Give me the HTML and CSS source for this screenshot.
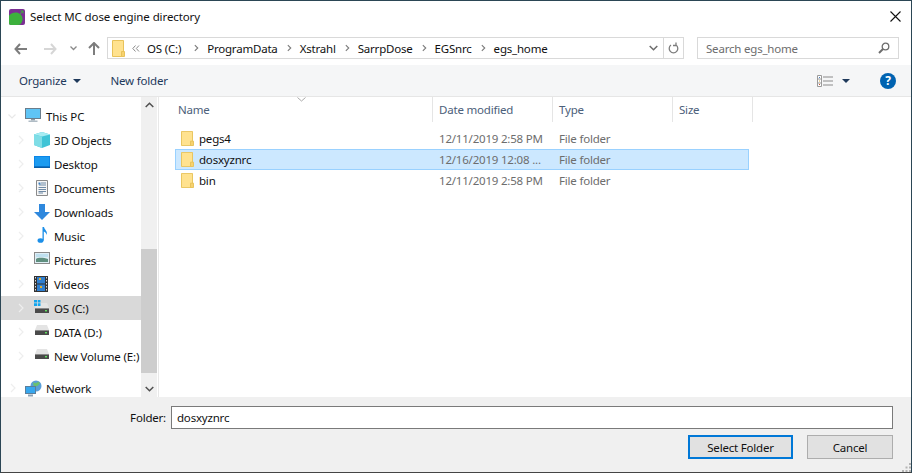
FILE: index.html
```html
<!DOCTYPE html>
<html lang="en">
<head>
<meta charset="utf-8">
<title>Select MC dose engine directory</title>
<link rel="stylesheet" href="styles.css">
</head>
<body>
<svg class="defs" width="0" height="0" aria-hidden="true">
  <symbol id="folder" viewBox="0 0 13 17">
    <path d="M.5 .5H11.5V16.5H.5Z" fill="#ffe28f" stroke="#e8c25a"/>
    <path d="M9.5 11.5H12.5V16.5H9.5Z" fill="#f7d26f" stroke="#e8c25a"/>
  </symbol>
  <symbol id="chev-r" viewBox="0 0 6 8"><path d="M1 .5 4.5 4 1 7.5" fill="none" stroke="#7a7a7a" stroke-width="1.3"/></symbol>
  <symbol id="tree-r" viewBox="0 0 6 10"><path d="M1 1 5 5 1 9" fill="none" stroke="#eeeeee" stroke-width="1.2"/></symbol>
  <symbol id="drive" viewBox="0 0 16 12">
    <path d="M3 1H13L15 6H1Z" fill="#e4e4e4"/>
    <rect x="1" y="6" width="14" height="5" fill="#4a4a4a"/>
    <rect x="1" y="6" width="14" height="1" fill="#8a8a8a"/>
    <rect x="11" y="8" width="2" height="1.4" fill="#5fe05f"/>
  </symbol>
</svg>
<div class="window">
  <header class="titlebar">
    <svg class="app-icon" width="16" height="16" viewBox="0 0 16 16">
      <rect width="16" height="16" rx="2" fill="#7b2f93"/>
      <path d="M0 6.5C2 4 5 3 8 3.500 12 4.500 14 8 13.500 11 13 14 11 16 9 16H2C.500 16 0 15 0 14Z" fill="#3cb13c"/>
      <path d="M10 6 14 2M14 2H11.500M14 2V4.500" stroke="#3cb13c" stroke-width="1" fill="none"/>
    </svg>
    <span class="title">Select MC dose engine directory</span>
    <svg class="close" width="11" height="11" viewBox="0 0 11 11"><path d="M.5 .5 10.500 10.500M10.500 .5 .5 10.500" stroke="#111" stroke-width="1.1"/></svg>
  </header>

  <nav class="navbar">
    <svg class="nav-icon back" width="13" height="12" viewBox="0 0 13 12"><path d="M6 1 1.500 6 6 11M2 6H13" fill="none" stroke="#7d7d7d" stroke-width="2"/></svg>
    <svg class="nav-icon forward" width="13" height="12" viewBox="0 0 13 12"><path d="M7 1 11.500 6 7 11M11 6H0" fill="none" stroke="#d6d6d6" stroke-width="2"/></svg>
    <svg class="nav-icon recent" width="7" height="5" viewBox="0 0 7 5"><path d="M.5 .5 3.500 3.500 6.500 .5" fill="none" stroke="#8a8a8a" stroke-width="1.300"/></svg>
    <svg class="nav-icon up" width="12" height="13" viewBox="0 0 12 13"><path d="M1 6 6 1 11 6M6 1.500V13" fill="none" stroke="#7d7d7d" stroke-width="2"/></svg>
    <div class="address">
      <svg class="addr-folder" width="13" height="17"><use href="#folder"/></svg>
      <svg class="crumb-more" width="8" height="7" viewBox="0 0 8 7"><path d="M3.500 .5 .8 3.500 3.500 6.500M7 .5 4.300 3.500 7 6.500" fill="none" stroke="#8a8a8a"/></svg>
      <span class="crumb crumb-first">OS (C:)</span>
      <svg class="sep" width="5" height="8"><use href="#chev-r"/></svg>
      <span class="crumb">ProgramData</span>
      <svg class="sep" width="5" height="8"><use href="#chev-r"/></svg>
      <span class="crumb">Xstrahl</span>
      <svg class="sep" width="5" height="8"><use href="#chev-r"/></svg>
      <span class="crumb">SarrpDose</span>
      <svg class="sep" width="5" height="8"><use href="#chev-r"/></svg>
      <span class="crumb">EGSnrc</span>
      <svg class="sep" width="5" height="8"><use href="#chev-r"/></svg>
      <span class="crumb">egs_home</span>
      <span class="spacer"></span>
      <svg class="addr-drop" width="9" height="6" viewBox="0 0 9 6"><path d="M.7 1 4.500 4.800 8.300 1" fill="none" stroke="#6d6d6d" stroke-width="1.500"/></svg>
      <span class="refresh">
        <svg width="11" height="12" viewBox="0 0 11 12"><path d="M3 3A4.300 4.300 0 1 0 8 3M8 .5V3.500H5" fill="none" stroke="#7d7d7d" stroke-width="1.300"/></svg>
      </span>
    </div>
    <div class="search">
      <span>Search egs_home</span>
      <svg width="12" height="12" viewBox="0 0 12 12"><circle cx="7.500" cy="4.500" r="3.300" fill="none" stroke="#6d6d6d" stroke-width="1.300"/><path d="M5 7 1 11" stroke="#6d6d6d" stroke-width="2"/></svg>
    </div>
  </nav>

  <div class="toolbar">
    <span class="tool">Organize</span>
    <span class="tri tri-org"></span>
    <span class="tool new-folder">New folder</span>
    <span class="spacer"></span>
    <svg class="view-icon" width="16" height="12" viewBox="0 0 16 12">
      <path d="M.5 .5H4.500V11.500H.5Z" fill="#fff" stroke="#9a9a9a"/>
      <path d="M1 4H4M1 8H4" stroke="#9a9a9a"/>
      <rect x="2" y="2" width="1" height="1" fill="#4a7fc0"/><rect x="2" y="5.500" width="1" height="1" fill="#d9a93c"/><rect x="2" y="9" width="1" height="1" fill="#c9543c"/>
      <path d="M6 2H16M6 6H16M6 10H16" stroke="#8a8a8a"/>
    </svg>
    <span class="tri tri-view"></span>
    <span class="help">?</span>
  </div>

  <main class="panes">
    <aside class="tree">
      <ul class="tree-list">
        <li class="tree-row root">
          <svg class="twist" width="8" height="5" viewBox="0 0 8 5"><path d="M.5 .5 4 4 7.500 .5" fill="none" stroke="#e8e8e8" stroke-width="1.200"/></svg>
          <svg class="ticon" width="16" height="14" viewBox="0 0 16 14"><rect x=".5" y=".5" width="15" height="10" fill="#5fc4f5" stroke="#6a7d8c"/><rect x="6" y="11" width="4" height="1.500" fill="#8a9aa6"/><rect x="3.500" y="12.500" width="9" height="1.500" fill="#b0bcc5"/></svg>
          <span>This PC</span>
        </li>
        <li class="tree-row">
          <svg class="twist-r" width="6" height="10"><use href="#tree-r"/></svg>
          <svg class="ticon" width="16" height="16" viewBox="0 0 16 16"><path d="M8 0 16 2.500V13L8 16 0 13V2.500Z" fill="#3fc4d6"/><path d="M8 4.500 16 2.500 8 0 0 2.500Z" fill="#a6ecf2"/><path d="M8 4.500V16L0 13V2.500Z" fill="#7fdde6"/></svg>
          <span>3D Objects</span>
        </li>
        <li class="tree-row">
          <svg class="twist-r" width="6" height="10"><use href="#tree-r"/></svg>
          <svg class="ticon" width="16" height="12" viewBox="0 0 16 12"><rect width="16" height="11" fill="#0b86e8"/><rect x="1" y="1" width="14" height="9" fill="#1c9bf0"/><rect y="10.500" width="16" height="1.500" fill="#0a5fa8"/></svg>
          <span>Desktop</span>
        </li>
        <li class="tree-row">
          <svg class="twist-r" width="6" height="10"><use href="#tree-r"/></svg>
          <svg class="ticon" width="16" height="16" viewBox="0 0 16 16"><path d="M2.500 .5H13.500V15.500H2.500Z" fill="#f6f6f6" stroke="#8a8a8a"/><path d="M7 3H12M5 5H12M4.500 7.500H12M4.500 9.500H12M4.500 11.500H12M4.500 13H9" stroke="#6f8aa5"/><rect x="4.500" y="2.500" width="2" height="2" fill="#3c7fc0"/></svg>
          <span>Documents</span>
        </li>
        <li class="tree-row">
          <svg class="twist-r" width="6" height="10"><use href="#tree-r"/></svg>
          <svg class="ticon" width="16" height="16" viewBox="0 0 16 16"><path d="M5 0H11V8H16L8 16 0 8H5Z" fill="#2f88dd"/></svg>
          <span>Downloads</span>
        </li>
        <li class="tree-row">
          <svg class="twist-r" width="6" height="10"><use href="#tree-r"/></svg>
          <svg class="ticon" width="16" height="16" viewBox="0 0 16 16"><ellipse cx="6.500" cy="13.500" rx="3" ry="2.300" fill="#1c8fe8"/><path d="M8.500 0H10C10.500 3 14 4 12.500 8 12.500 6 11 5 9.800 4.500V13.500H8.500Z" fill="#1c8fe8"/></svg>
          <span>Music</span>
        </li>
        <li class="tree-row">
          <svg class="twist-r" width="6" height="10"><use href="#tree-r"/></svg>
          <svg class="ticon" width="16" height="12" viewBox="0 0 16 12"><rect x=".5" y=".5" width="15" height="11" fill="#dfeef5" stroke="#8a8a8a"/><path d="M2 7C5 5 10 6 14 7V10H2Z" fill="#5f8f7f"/><rect x="2" y="2" width="12" height="3" fill="#bfe0ef"/></svg>
          <span>Pictures</span>
        </li>
        <li class="tree-row">
          <svg class="twist-r" width="6" height="10"><use href="#tree-r"/></svg>
          <svg class="ticon" width="14" height="16" viewBox="0 0 14 16"><rect width="14" height="16" fill="#333"/><rect x="3" y="1" width="8" height="6.500" fill="#2f7fd0"/><rect x="3" y="8.500" width="8" height="6.500" fill="#2f7fd0"/><rect x="5" y="2" width="2" height="2" fill="#e0b030"/><rect x="6" y="10" width="2" height="2" fill="#e0b030"/><path d="M1.500 1V15M12.500 1V15" stroke="#ddd" stroke-dasharray="1.500 1.500"/></svg>
          <span>Videos</span>
        </li>
        <li class="tree-row active">
          <svg class="twist-r" width="6" height="10"><use href="#tree-r"/></svg>
          <svg class="ticon" width="16" height="14" viewBox="0 0 16 14"><use href="#drive" y="2" width="16" height="12"/><path d="M0 0H3V2.500H0ZM3.700 0H6.500V2.500H3.700ZM0 3.300H3V6H0ZM3.700 3.300H6.500V6H3.700Z" fill="#12a5ee"/></svg>
          <span>OS (C:)</span>
        </li>
        <li class="tree-row">
          <svg class="twist-r" width="6" height="10"><use href="#tree-r"/></svg>
          <svg class="ticon" width="16" height="12"><use href="#drive"/></svg>
          <span>DATA (D:)</span>
        </li>
        <li class="tree-row">
          <svg class="twist-r" width="6" height="10"><use href="#tree-r"/></svg>
          <svg class="ticon" width="16" height="12"><use href="#drive"/></svg>
          <span>New Volume (E:)</span>
        </li>
        <li class="tree-row root network">
          <svg class="twist-r root-twist" width="6" height="10"><use href="#tree-r"/></svg>
          <svg class="ticon" width="17" height="17" viewBox="0 0 17 17"><circle cx="11" cy="6" r="5.500" fill="#5a9fd8"/><path d="M8 2C10 4 12 3 13 1.500L15 3C14 6 11 6 9 8Z" fill="#6cc070"/><rect x=".5" y="6.500" width="10" height="7" fill="#37a7ee" stroke="#5b7f9c"/><rect x="3" y="14.500" width="5" height="2" fill="#8da3b5"/></svg>
          <span>Network</span>
        </li>
      </ul>
      <div class="tree-scroll">
        <svg class="sarrow" width="9" height="6" viewBox="0 0 9 6"><path d="M.7 5 4.500 1.200 8.300 5" fill="none" stroke="#505050" stroke-width="1.500"/></svg>
        <span class="sthumb"></span>
        <svg class="sarrow" width="9" height="6" viewBox="0 0 9 6"><path d="M.7 1 4.500 4.800 8.300 1" fill="none" stroke="#505050" stroke-width="1.500"/></svg>
      </div>
    </aside>

    <section class="files">
      <div class="file-head">
        <span class="col col-name">Name
          <svg class="sort" width="9" height="5" viewBox="0 0 9 5"><path d="M.5 .5 4.500 4 8.500 .5" fill="none" stroke="#a9a9a9"/></svg>
        </span>
        <span class="col col-date">Date modified</span>
        <span class="col col-type">Type</span>
        <span class="col col-size">Size</span>
      </div>
      <div class="file-row">
        <svg class="ficon" width="13" height="15" viewBox="0 0 13 17" preserveAspectRatio="none"><use href="#folder"/></svg>
        <span class="f-name">pegs4</span><span class="f-date">12/11/2019 2:58 PM</span><span class="f-type">File folder</span>
      </div>
      <div class="file-row selected">
        <svg class="ficon" width="13" height="15" viewBox="0 0 13 17" preserveAspectRatio="none"><use href="#folder"/></svg>
        <span class="f-name">dosxyznrc</span><span class="f-date">12/16/2019 12:08 ...</span><span class="f-type">File folder</span>
      </div>
      <div class="file-row">
        <svg class="ficon" width="13" height="15" viewBox="0 0 13 17" preserveAspectRatio="none"><use href="#folder"/></svg>
        <span class="f-name">bin</span><span class="f-date">12/11/2019 2:58 PM</span><span class="f-type">File folder</span>
      </div>
    </section>
  </main>

  <footer class="footer">
    <div class="folder-line">
      <label class="folder-label" for="folder">Folder:</label>
      <input class="folder-input" id="folder" type="text" value="dosxyznrc">
    </div>
    <div class="buttons">
      <button class="btn btn-primary" type="button">Select Folder</button>
      <button class="btn btn-cancel" type="button">Cancel</button>
    </div>
    <svg class="grip" width="9" height="9" viewBox="0 0 9 9"><path d="M7 0H9V2H7ZM3.500 3.500H5.500V5.500H3.500ZM7 3.500H9V5.500H7ZM0 7H2V9H0ZM3.500 7H5.500V9H3.500ZM7 7H9V9H7Z" fill="#b4b4b4"/></svg>
  </footer>
</div>
</body>
</html>
```
FILE: styles.css
```css
* { box-sizing: border-box; }
html, body { margin: 0; padding: 0; height: 100%; overflow: hidden; background: #fff; }
body {
  font-family: "Noto Sans", "Open Sans", "Liberation Sans", sans-serif;
  font-size: 11.5px;
  letter-spacing: -.2px;
  color: #111;
}
.defs { position: absolute; }
.spacer { flex: 1; }

.window {
  width: 912px;
  height: 473px;
  display: flex;
  flex-direction: column;
  border: 1px solid #2b4655;
  border-bottom-color: #444;
  background: #fff;
  overflow: hidden;
}

.titlebar {
  height: 30px;
  flex: none;
  display: flex;
  align-items: center;
  padding: 0 10px 0 8px;
}
.app-icon { margin-top: 1px; }
.title { margin-left: 5px; letter-spacing: -.1px; }
.close { margin-left: auto; }

.navbar {
  height: 34px;
  flex: none;
  display: flex;
  align-items: flex-start;
  padding-top: 6px;
  padding-left: 13px;
}
.nav-icon { flex: none; margin-top: 6px; }
.forward { margin-left: 17px; }
.recent { margin-left: 13px; margin-top: 9px; }
.up { margin-left: 11px; margin-top: 5px; }

.address {
  margin-left: 7px;
  width: 577px;
  height: 22px;
  border: 1px solid #d9d9d9;
  display: flex;
  align-items: center;
  padding-left: 4px;
  flex: none;
}
.addr-folder { flex: none; }
.crumb-more { flex: none; margin: 0 7px 0 7px; }
.crumb { white-space: nowrap; }
.crumb-first { margin-right: 4px; }
.sep { flex: none; margin: 0 8px 0 9px; }
.addr-drop { margin-right: 5px; }
.refresh {
  width: 20px;
  height: 20px;
  border-left: 1px solid #d9d9d9;
  display: flex;
  align-items: center;
  justify-content: center;
}
.search {
  margin-left: 13px;
  width: 202px;
  height: 22px;
  border: 1px solid #d9d9d9;
  display: flex;
  align-items: center;
  justify-content: space-between;
  padding: 0 8px;
  color: #6d6d6d;
  flex: none;
}

.toolbar {
  height: 32px;
  flex: none;
  display: flex;
  align-items: center;
  background: #f5f6f7;
  border-bottom: 1px solid #e6e6e6;
  padding-left: 18px;
  color: #1e395b;
}
.tri {
  width: 0;
  height: 0;
  border-left: 4px solid transparent;
  border-right: 4px solid transparent;
  border-top: 4px solid #1e395b;
}
.tri-org { margin-left: 6px; }
.new-folder { margin-left: 30px; }
.tri-view { margin-left: 9px; }
.help {
  width: 16px;
  height: 16px;
  margin: 0 15px 0 30px;
  border-radius: 50%;
  background: #0063b1;
  color: #fff;
  font-weight: 700;
  font-size: 12px;
  line-height: 16px;
  text-align: center;
}

.panes { flex: 1; display: flex; min-height: 0; }

.tree {
  width: 158px;
  flex: none;
  display: flex;
  border-right: 1px solid #e8e8e8;
}
.tree-list {
  list-style: none;
  margin: 0;
  padding: 7px 0 0;
  width: 140px;
  flex: none;
}
.tree-row {
  height: 24px;
  display: flex;
  align-items: center;
  position: relative;
  padding-left: 53px;
  white-space: nowrap;
  letter-spacing: -.13px;
}
.tree-row.root { padding-left: 45px; }
.tree-row.active { background: #d9d9d9; }
.tree-row.network { margin-top: 8px; }
.twist-r, .twist, .ticon { position: absolute; }
.twist-r { left: 17px; top: 7px; }
.root-twist { left: 9px; }
.twist { left: 7px; top: 10px; }
.ticon { left: 33px; top: 4px; }
.tree-row.root .ticon { left: 24px; }
.tree-row:nth-child(6) .ticon { top: 3px; }

.tree-scroll {
  width: 16px;
  flex: none;
  background: #f0f0f0;
  display: flex;
  flex-direction: column;
  align-items: center;
}
.sarrow { flex: none; margin: 5px 0; }
.sthumb {
  width: 16px;
  height: 124px;
  background: #cdcdcd;
  margin-top: 136px;
  margin-bottom: 8px;
}

.files { flex: 1; padding-left: 16px; position: relative; }
.file-head {
  height: 25px;
  display: flex;
  color: #4c607a;
  margin-bottom: 6px;
}
.col {
  height: 25px;
  line-height: 25px;
  padding-left: 6px;
  border-right: 1px solid #e5e5e5;
  flex: none;
}
.col-name { width: 258px; padding-left: 3px; position: relative; }
.sort { position: absolute; left: 122px; top: 0; }
.col-date { width: 120px; }
.col-type { width: 120px; }
.col-size { width: 80px; }

.file-row {
  width: 574px;
  height: 21px;
  display: flex;
  align-items: center;
  border: 1px solid transparent;
  position: relative;
  color: #6d6d6d;
  white-space: nowrap;
}
.file-row.selected { background: #cce8ff; border-color: #99d1ff; }
.ficon { flex: none; margin-left: 5px; }
.f-name { width: 240px; margin-left: 5px; color: #111; }
.f-date { width: 120px; }

.footer {
  height: 75px;
  flex: none;
  background: #f0f0f0;
  position: relative;
  padding: 9px 18px 0 0;
}
.folder-line { display: flex; align-items: center; justify-content: flex-end; }
.folder-label { margin-right: 5px; }
.folder-input {
  width: 722px;
  height: 23px;
  border: 1px solid #7a7a7a;
  padding: 0 5px;
  font: inherit;
  letter-spacing: inherit;
  color: #111;
  background: #fff;
  outline: none;
}
.buttons { display: flex; justify-content: flex-end; margin-top: 6px; }
.btn {
  height: 24px;
  background: #e1e1e1;
  font: inherit;
  letter-spacing: inherit;
  color: #111;
  padding: 0;
}
.btn-primary { width: 105px; border: 2px solid #0078d7; }
.btn-cancel { width: 86px; border: 1px solid #adadad; margin-left: 14px; }
.grip { position: absolute; right: 0; bottom: 0; }
```
